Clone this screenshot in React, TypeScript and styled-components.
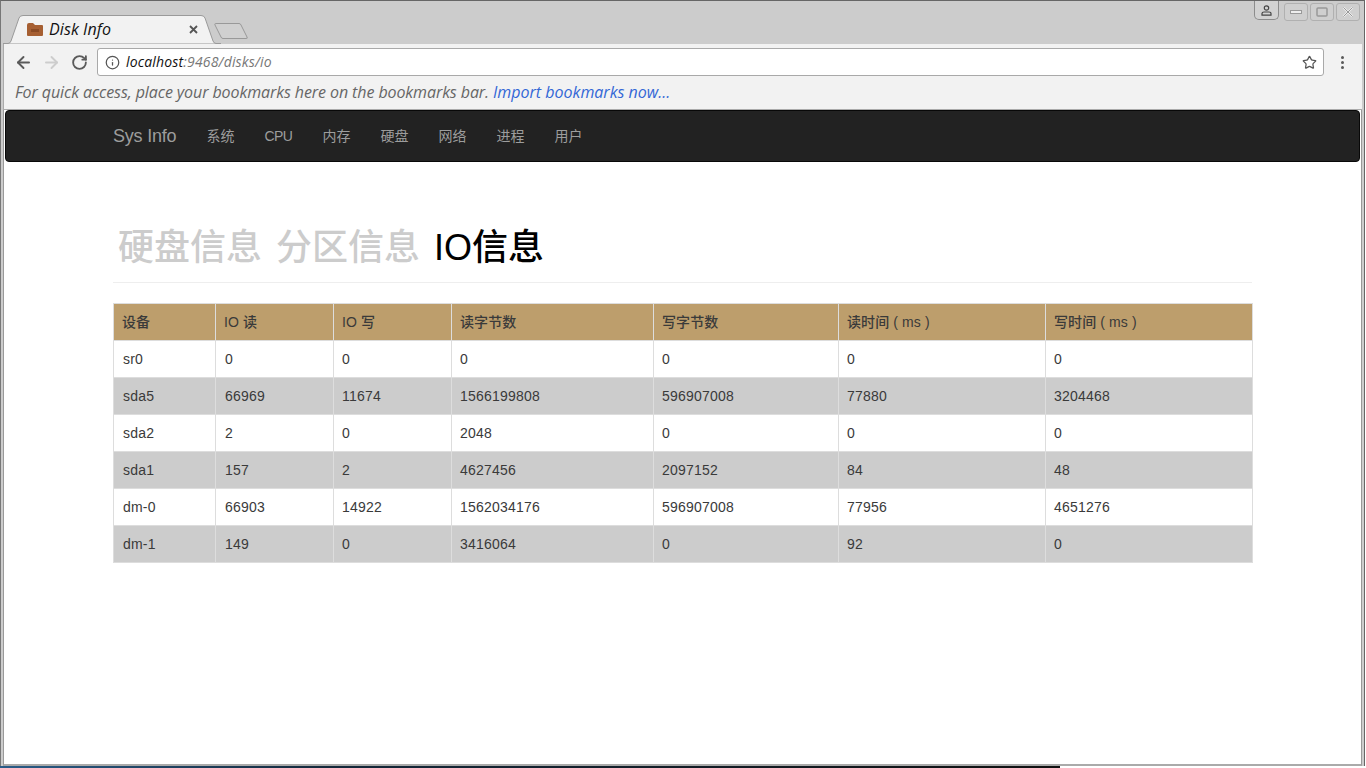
import styled, { createGlobalStyle } from "styled-components";
import { ArrowLeft, ArrowRight, Info, RotateCw, Star } from "lucide-react";

const GlobalStyle = createGlobalStyle`
  html, body {
    margin: 0;
    padding: 0;
    background: #fff;
  }
  * {
    box-sizing: border-box;
  }
`;

const Desktop = styled.div`
  width: 1366px;
  height: 768px;
  overflow: hidden;
  background: #fff;
  font-family: "Liberation Sans", "Noto Sans CJK SC", sans-serif;
`;

const DesktopStrip = styled.div`
  height: 2px;
  background: linear-gradient(to right, #2a5c88 0, #14283a 330px, #111 1060px, #fff 1060px);
`;

const Window = styled.div`
  width: 1365px;
  height: 766px;
  display: flex;
  flex-direction: column;
  background: #ccc;
  border-top: 1px solid #666;
  border-left: 1px solid #777;
  border-right: 1px solid #666;
  padding: 0 2px;
`;

const TabStrip = styled.div`
  height: 43px;
  display: flex;
  align-items: flex-start;
  flex: none;
`;

const Tab = styled.div`
  position: relative;
  width: 212px;
  height: 43px;
  padding: 13px 0 0 24px;
  display: flex;
  align-items: center;
  gap: 6px;
  flex: none;
`;

const TabShape = styled.svg`
  position: absolute;
  left: 0;
  top: 0;
`;

const TabFavicon = styled.svg`
  position: relative;
  flex: none;
`;

const TabTitle = styled.span`
  position: relative;
  font: italic 16px/20px "Open Sans", "Noto Sans", sans-serif;
  letter-spacing: 0.1px;
  color: #111;
  flex: 1;
`;

const TabClose = styled.svg`
  position: relative;
  margin-right: 17px;
  flex: none;
`;

const NewTab = styled.svg`
  margin: 21px 0 0 -1px;
  flex: none;
`;

const WindowControls = styled.div`
  margin-left: auto;
  margin-right: 2px;
  display: flex;
  align-items: flex-start;
`;

const ProfileButton = styled.div`
  width: 25px;
  height: 19px;
  margin-right: 3px;
  display: flex;
  align-items: center;
  justify-content: center;
  background: #d2d2d2;
  border: 1px solid #8c8c8c;
  border-top: none;
  border-radius: 0 0 5px 5px;
`;

const ControlButton = styled.div`
  width: 24px;
  height: 18px;
  margin: 2px 0 0 2px;
  display: flex;
  align-items: center;
  justify-content: center;
  background: #cfcfcf;
  border: 1px solid #b0b0b0;
  border-radius: 3px;
`;

const Toolbar = styled.div`
  height: 34px;
  flex: none;
  display: flex;
  align-items: center;
  background: #f2f2f2;
  border-left: 1px solid #aaa;
  padding: 2px 0 0 5px;
  color: #5a5a5a;
`;

const NavIcon = styled.div<{ $disabled?: boolean }>`
  width: 28px;
  display: flex;
  justify-content: center;
  color: ${(props) => (props.$disabled ? "#cdcdcd" : "#5a5a5a")};
`;

const Omnibox = styled.div`
  width: 1227px;
  height: 28px;
  margin-left: 4px;
  display: flex;
  align-items: center;
  background: #fff;
  border: 1px solid #a9a9a9;
  border-radius: 3px;
  padding: 0 6px 0 7px;
`;

const UrlText = styled.div`
  flex: 1;
  margin-left: 6px;
  font: italic 14px/20px "Open Sans", "Noto Sans", sans-serif;
  letter-spacing: 0.17px;
  color: #777;
`;

const UrlHost = styled.span`
  color: #111;
`;

const MenuDots = styled.div`
  margin-left: 17px;
  display: flex;
  flex-direction: column;
  gap: 2px;
`;

const MenuDot = styled.span`
  width: 3px;
  height: 3px;
  background: #5a5a5a;
  border-radius: 50%;
`;

const BookmarkBar = styled.div`
  height: 32px;
  flex: none;
  display: flex;
  align-items: center;
  background: #f2f2f2;
  border-left: 1px solid #aaa;
  border-bottom: 1px solid #aaa;
  padding: 0 0 4px 11px;
  font: italic 16px/20px "Open Sans", "Noto Sans", sans-serif;
  letter-spacing: -0.09px;
  color: #666;
`;

const BookmarkLink = styled.a`
  margin-left: 4px;
  letter-spacing: 0;
  color: #3367d6;
`;

const Page = styled.div`
  flex: 1;
  background: #fff;
  border-left: 1px solid #999;
  border-right: 1px solid #999;
  border-bottom: 2px solid #aaa;
  min-height: 0;
`;

const Navbar = styled.nav`
  height: 52px;
  margin: 0 1px;
  display: flex;
  align-items: center;
  padding-left: 107px;
  background: #222;
  border: 1px solid #080808;
  border-radius: 4px;
`;

const Brand = styled.a`
  font-size: 18px;
  line-height: 20px;
  letter-spacing: -0.2px;
  color: #9d9d9d;
  margin-right: 30px;
`;

const NavLink = styled.a<{ $latin?: boolean }>`
  width: 28px;
  font-size: 14px;
  line-height: 20px;
  letter-spacing: ${(props) => (props.$latin ? "-0.6px" : "0")};
  color: #9d9d9d;
  margin-right: 30px;
  white-space: nowrap;
`;

const Container = styled.div`
  width: 1139px;
  margin-left: 109px;
`;

const PageHeader = styled.div`
  display: flex;
  gap: 14px;
  padding: 66px 0 14px 5px;
  border-bottom: 1px solid #eee;
  margin-bottom: 20px;
`;

const HeaderTab = styled.a<{ $active?: boolean }>`
  font-size: 36px;
  font-weight: 500;
  line-height: 40px;
  color: ${(props) => (props.$active ? "#000" : "#ccc")};
`;

const Table = styled.table`
  width: 1139px;
  table-layout: fixed;
  border-collapse: collapse;
  font-size: 14px;
  line-height: 20px;
  letter-spacing: 0.2px;
  color: #3a3a3a;
`;

const HeadCell = styled.th`
  height: 37px;
  padding: 8px;
  font-weight: 500;
  letter-spacing: 0.1px;
  text-align: left;
  background: #bd9e6c;
  border: 1px solid #ddd;
`;

const Row = styled.tr<{ $shaded: boolean }>`
  background: ${(props) => (props.$shaded ? "#ccc" : "#fff")};
`;

const Cell = styled.td`
  height: 37px;
  padding: 8px;
  border: 1px solid #ddd;

  &:nth-child(-n + 2) {
    padding-left: 9px;
  }
`;

const columns = [
  { title: "设备", width: 102 },
  { title: "IO 读", width: 118 },
  { title: "IO 写", width: 118 },
  { title: "读字节数", width: 202 },
  { title: "写字节数", width: 185 },
  { title: "读时间 ( ms )", width: 207 },
  { title: "写时间 ( ms )", width: 207 },
];

const rows = [
  ["sr0", "0", "0", "0", "0", "0", "0"],
  ["sda5", "66969", "11674", "1566199808", "596907008", "77880", "3204468"],
  ["sda2", "2", "0", "2048", "0", "0", "0"],
  ["sda1", "157", "2", "4627456", "2097152", "84", "48"],
  ["dm-0", "66903", "14922", "1562034176", "596907008", "77956", "4651276"],
  ["dm-1", "149", "0", "3416064", "0", "92", "0"],
];

const navItems = ["系统", "CPU", "内存", "硬盘", "网络", "进程", "用户"];

const App = () => {
  return (
    <Desktop>
      <GlobalStyle />
      <Window>
        <TabStrip>
          <Tab>
            <TabShape width="218" height="43" viewBox="0 0 218 43">
              <path
                d="M0 42.5 H5 Q7 42.5 8 40 L16 17 Q17 14.5 20 14.5 H198 Q201 14.5 202 17 L210 40 Q211 42.5 213 42.5 H218 V43 H0 Z"
                fill="#f2f2f2"
                stroke="#9a9a9a"
              />
            </TabShape>
            <TabFavicon width="16" height="13" viewBox="0 0 16 13">
              <path d="M0 2 Q0 0 2 0 H6 L8 2 H15 Q16 2 16 3 V12 Q16 13 15 13 H1 Q0 13 0 12 Z" fill="#a65f32" />
              <rect x="4" y="6" width="8" height="3" fill="#8a4a24" />
            </TabFavicon>
            <TabTitle>Disk Info</TabTitle>
            <TabClose width="9" height="9" viewBox="0 0 9 9">
              <path d="M1 1 L8 8 M8 1 L1 8" stroke="#555" strokeWidth="1.8" />
            </TabClose>
          </Tab>
          <NewTab width="36" height="18" viewBox="0 0 36 18">
            <path
              d="M1.5 1.5 H25 Q26.5 1.5 27 3 L33 15 Q34 16.5 32 16.5 H9 Q7.5 16.5 7 15 L1 3 Q0.5 1.5 1.5 1.5 Z"
              fill="#d0d0d0"
              stroke="#999"
            />
          </NewTab>
          <WindowControls>
            <ProfileButton>
              <svg width="11" height="11" viewBox="0 0 11 11">
                <circle cx="5.5" cy="3" r="2.2" fill="none" stroke="#444" strokeWidth="1.2" />
                <path d="M1 10.2 V8.5 Q1 7 3 7 H8 Q10 7 10 8.5 V10.2 Z" fill="none" stroke="#444" strokeWidth="1.2" />
              </svg>
            </ProfileButton>
            <ControlButton>
              <svg width="12" height="4" viewBox="0 0 12 4">
                <rect x="0.5" y="0.5" width="11" height="3" fill="#eee" stroke="#999" />
              </svg>
            </ControlButton>
            <ControlButton>
              <svg width="12" height="10" viewBox="0 0 12 10">
                <rect x="1" y="1" width="10" height="8" rx="1" fill="none" stroke="#999" strokeWidth="1.5" />
              </svg>
            </ControlButton>
            <ControlButton>
              <svg width="12" height="10" viewBox="0 0 12 10">
                <path d="M1.5 0.5 L10.5 9.5 M10.5 0.5 L1.5 9.5" stroke="#eee" strokeWidth="2" />
                <path d="M1.5 0.5 L10.5 9.5 M10.5 0.5 L1.5 9.5" stroke="#999" strokeWidth="1" />
              </svg>
            </ControlButton>
          </WindowControls>
        </TabStrip>
        <Toolbar>
          <NavIcon>
            <ArrowLeft size={19} strokeWidth={2.4} />
          </NavIcon>
          <NavIcon $disabled>
            <ArrowRight size={19} strokeWidth={2.4} />
          </NavIcon>
          <NavIcon>
            <RotateCw size={17} strokeWidth={2.6} />
          </NavIcon>
          <Omnibox>
            <Info size={15} strokeWidth={2} color="#555" />
            <UrlText>
              <UrlHost>localhost</UrlHost>:9468/disks/io
            </UrlText>
            <Star size={15} strokeWidth={2} color="#555" />
          </Omnibox>
          <MenuDots>
            <MenuDot />
            <MenuDot />
            <MenuDot />
          </MenuDots>
        </Toolbar>
        <BookmarkBar>
          For quick access, place your bookmarks here on the bookmarks bar.
          <BookmarkLink>Import bookmarks now...</BookmarkLink>
        </BookmarkBar>
        <Page>
          <Navbar>
            <Brand>Sys Info</Brand>
            {navItems.map((item) => (
              <NavLink key={item} $latin={item === "CPU"}>
                {item}
              </NavLink>
            ))}
          </Navbar>
          <Container>
            <PageHeader>
              <HeaderTab>硬盘信息</HeaderTab>
              <HeaderTab>分区信息</HeaderTab>
              <HeaderTab $active>IO信息</HeaderTab>
            </PageHeader>
            <Table>
              <colgroup>
                {columns.map((col) => (
                  <col key={col.title} style={{ width: col.width }} />
                ))}
              </colgroup>
              <thead>
                <tr>
                  {columns.map((col) => (
                    <HeadCell key={col.title}>{col.title}</HeadCell>
                  ))}
                </tr>
              </thead>
              <tbody>
                {rows.map((row, i) => (
                  <Row key={row[0]} $shaded={i % 2 === 1}>
                    {row.map((value, j) => (
                      <Cell key={j}>{value}</Cell>
                    ))}
                  </Row>
                ))}
              </tbody>
            </Table>
          </Container>
        </Page>
      </Window>
      <DesktopStrip />
    </Desktop>
  );
};

export default App;
